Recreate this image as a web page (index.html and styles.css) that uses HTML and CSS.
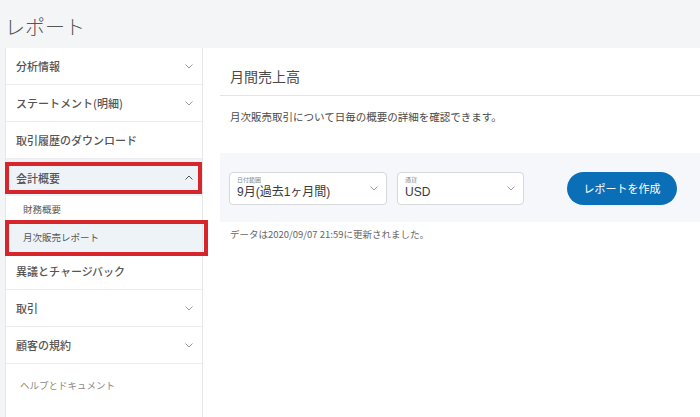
FILE: index.html
```html
<!DOCTYPE html>
<html lang="ja">
<head>
<meta charset="utf-8">
<title>レポート</title>
<link rel="stylesheet" href="styles.css">
</head>
<body>
<header class="page-head">レポート</header>
<div class="layout">
  <nav class="sidebar">
    <div class="nav-item"><span>分析情報</span><svg class="chev" viewBox="0 0 8 5"><path d="M0.5 0.5 L4 4 L7.5 0.5"/></svg></div>
    <div class="nav-item"><span>ステートメント(明細)</span><svg class="chev" viewBox="0 0 8 5"><path d="M0.5 0.5 L4 4 L7.5 0.5"/></svg></div>
    <div class="nav-item"><span>取引履歴のダウンロード</span></div>
    <div class="nav-item open mark-a"><span>会計概要</span><svg class="chev up" viewBox="0 0 8 5"><path d="M0.5 4.5 L4 1 L7.5 4.5"/></svg></div>
    <div class="sub-item"><span>財務概要</span></div>
    <div class="sub-item active mark-b"><span>月次販売レポート</span></div>
    <div class="nav-item"><span>異議とチャージバック</span></div>
    <div class="nav-item"><span>取引</span><svg class="chev" viewBox="0 0 8 5"><path d="M0.5 0.5 L4 4 L7.5 0.5"/></svg></div>
    <div class="nav-item"><span>顧客の規約</span><svg class="chev" viewBox="0 0 8 5"><path d="M0.5 0.5 L4 4 L7.5 0.5"/></svg></div>
    <div class="help">ヘルプとドキュメント</div>
  </nav>
  <main class="main">
    <h1 class="title">月間売上高</h1>
    <p class="desc">月次販売取引について日毎の概要の詳細を確認できます。</p>
    <div class="band">
      <div class="select s1">
        <div class="sel-text"><span class="sel-label">日付範囲</span><span class="sel-value">9月(過去1ヶ月間)</span></div>
        <svg class="chev" viewBox="0 0 8 5"><path d="M0.5 0.5 L4 4 L7.5 0.5"/></svg>
      </div>
      <div class="select s2">
        <div class="sel-text"><span class="sel-label">通貨</span><span class="sel-value">USD</span></div>
        <svg class="chev" viewBox="0 0 8 5"><path d="M0.5 0.5 L4 4 L7.5 0.5"/></svg>
      </div>
      <button class="btn">レポートを作成</button>
    </div>
    <p class="updated">データは2020/09/07 21:59に更新されました。</p>
  </main>
</div>
</body>
</html>
```
FILE: styles.css
```css
* { box-sizing: border-box; }
html, body { margin: 0; padding: 0; }
body {
  width: 700px;
  height: 417px;
  overflow: hidden;
  background: #f4f5f7;
  font-family: "Liberation Sans", "Noto Sans CJK JP", sans-serif;
  color: #4a4a4a;
}
.page-head {
  height: 48px;
  padding: 15px 0 0 5px;
  font-size: 20px;
  line-height: 24px;
  font-weight: 300;
  color: #555;
  font-family: "Noto Sans CJK JP", sans-serif;
}
.layout {
  display: flex;
  height: 369px;
  padding-left: 5px;
}
.sidebar {
  width: 198px;
  background: #fff;
  border-left: 1px solid #e6e7ea;
  border-right: 1px solid #e6e7ea;
  display: flex;
  flex-direction: column;
  font-family: "Noto Sans CJK JP", sans-serif;
}
.nav-item {
  position: relative;
  height: 37px;
  flex: none;
  display: flex;
  align-items: center;
  justify-content: space-between;
  padding: 0 9px 0 10px;
  border-bottom: 1px solid #ececee;
  font-size: 11px;
  font-weight: 500;
  color: #555;
}
.nav-item.open {
  background: #eef3f8;
  border-bottom: none;
}
.chev {
  width: 8px;
  height: 5px;
  fill: none;
  stroke: #9a9a9a;
  stroke-width: 1;
}
.chev.up { stroke: #555; }
.sub-item {
  position: relative;
  height: 25px;
  flex: none;
  display: flex;
  align-items: center;
  padding-left: 17px;
  font-size: 9.5px;
  color: #555;
}
.sub-item.active {
  height: 32px;
  background: #eef3f8;
  border-bottom: 1px solid #ececee;
}
.mark-a::after, .mark-b::after {
  content: "";
  position: absolute;
  border: 4px solid #d7252c;
}
.mark-a::after { top: 3px; bottom: 2px; left: -1px; right: 0; }
.mark-b::after { top: -1px; bottom: -4px; left: -1px; right: -6px; }
.help {
  padding: 14px 0 0 14px;
  font-size: 9.5px;
  color: #8a8a8a;
}
.main {
  flex: 1;
  background: #fff;
  padding-left: 17px;
  font-family: "Noto Sans CJK JP", sans-serif;
}
.title {
  margin: 0;
  height: 48px;
  padding: 18px 0 0 10px;
  font-size: 14px;
  line-height: 20px;
  font-weight: 400;
  color: #4a4a4a;
  border-bottom: 1px solid #e3e4e6;
}
.desc {
  margin: 0;
  padding: 13px 0 0 10px;
  height: 57px;
  font-size: 10.5px;
  line-height: 16px;
  color: #4a4a4a;
}
.band {
  height: 69px;
  background: #f5f7fa;
  display: flex;
  align-items: center;
  padding: 1px 0 0 9px;
}
.select {
  height: 33px;
  background: #fff;
  border: 1px solid #d6d8db;
  border-radius: 4px;
  display: flex;
  align-items: center;
  justify-content: space-between;
  padding: 0 8px 0 7px;
}
.s1 { width: 158px; }
.s2 { width: 127px; margin-left: 10px; }
.sel-text { display: flex; flex-direction: column; }
.sel-label {
  font-size: 6px;
  line-height: 8px;
  color: #888;
}
.sel-value {
  font-family: "Liberation Sans", "Noto Sans CJK JP", sans-serif;
  font-size: 12px;
  line-height: 16px;
  color: #3a3a3a;
}
.btn {
  margin-left: 43px;
  width: 110px;
  height: 33px;
  border: none;
  border-radius: 17px;
  background: #0b6fb8;
  color: #fff;
  font-family: "Noto Sans CJK JP", sans-serif;
  font-size: 11px;
  padding: 0;
}
.updated {
  margin: 0;
  padding: 5px 0 0 10px;
  font-size: 9.5px;
  line-height: 14px;
  color: #666;
}
```
